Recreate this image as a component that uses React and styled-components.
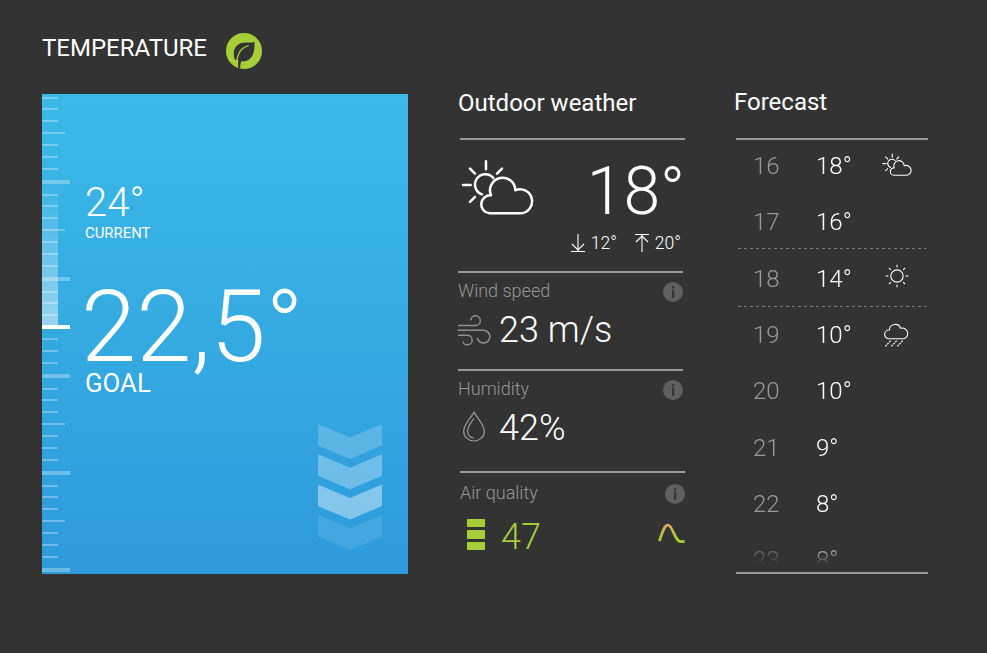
import React from 'react';
import styled, { createGlobalStyle, css } from 'styled-components';

const GlobalStyle = createGlobalStyle`
  *, *::before, *::after { box-sizing: border-box; }
  html, body { margin: 0; background: #333333; }
  body { font-family: Roboto, "Liberation Sans", sans-serif; color: #fff; overflow: hidden; }
  svg { display: block; flex: none; }
`;

const Page = styled.main`
  width: 987px;
  height: 653px;
  padding: 33px 0 0 42px;
  background: #333333;
  display: grid;
  grid-template-columns: 366px 227px 194px;
  column-gap: 50px;
  align-items: start;
`;

const TemperatureSection = styled.section`
  display: flex;
  flex-direction: column;
`;

const TitleBar = styled.header`
  display: flex;
  align-items: flex-start;
  justify-content: space-between;
  width: 220px;
  height: 61px;
`;

const Title = styled.h1`
  margin: 0 0 ${(p) => p.$gap || 0}px;
  font-size: 24px;
  font-weight: 400;
  line-height: 30px;
  white-space: nowrap;
`;

const Card = styled.div`
  position: relative;
  display: flex;
  width: 366px;
  height: 480px;
  background: linear-gradient(to bottom, #3bb9e8 0%, #35aae1 50%, #2d9adc 100%);
  overflow: hidden;
`;

const Scale = styled.div`
  position: relative;
  width: 43px;
  padding-top: 3px;
  display: flex;
  flex-direction: column;
  align-items: flex-start;
`;

const Fill = styled.div`
  position: absolute;
  left: 0;
  top: 88px;
  width: 16px;
  height: 145px;
  background: linear-gradient(to bottom, rgba(255, 255, 255, 0), rgba(255, 255, 255, 0.5));
`;

const tickKinds = {
  minor: css`width: 16px; height: 2px; margin-bottom: 10px;`,
  lead: css`width: 16px; height: 2px; margin-bottom: 9px;`,
  middle: css`width: 23px; height: 2px; margin-bottom: 10px;`,
  major: css`width: 28px; height: 4px; margin-bottom: 10px;`,
  goal: css`width: 28px; height: 4px; margin: -1px 0 9px; background: #fff;`,
};

const Tick = styled.div`
  flex: none;
  background: rgba(255, 255, 255, 0.3);
  ${(p) => tickKinds[p.$kind]}
`;

const Readings = styled.div`
  flex: 1;
  padding-top: 85px;
`;

const Reading = styled.div`
  font-size: ${(p) => p.$size}px;
  line-height: ${(p) => p.$line}px;
  font-weight: ${(p) => (p.$light ? 300 : 400)};
  margin: ${(p) => p.$margin || '0'};
  white-space: nowrap;
`;

const Trend = styled.div`
  align-self: flex-end;
  margin: 0 26px 24px 0;
`;

const Outdoor = styled.section`
  padding-top: 55px;
`;

const Block = styled.div`
  width: 225px;
  height: ${(p) => p.$height}px;
  margin-left: ${(p) => p.$shift || 0}px;
  border-top: 2px solid #999;
  display: flex;
  flex-direction: column;
`;

const Summary = styled.div`
  display: flex;
  justify-content: space-between;
  padding: 19px 0 0 1px;
`;

const BigTemp = styled.div`
  font-size: 66px;
  font-weight: 300;
  line-height: 66px;
`;

const Range = styled.div`
  display: flex;
  justify-content: flex-end;
  align-items: center;
  gap: 18px;
  padding-right: 4px;
  margin-top: 7px;
`;

const RangeItem = styled.div`
  display: flex;
  align-items: center;
  gap: 6px;
  font-size: 17.6px;
  font-weight: 300;
  line-height: 22px;
`;

const Row = styled.div`
  display: flex;
  align-items: center;
  justify-content: space-between;
  height: ${(p) => p.$height || 22}px;
  margin-top: ${(p) => p.$top || 0}px;
`;

const Label = styled.div`
  font-size: 18px;
  font-weight: 300;
  color: #969696;
  line-height: 22px;
`;

const Value = styled.div`
  font-size: 36px;
  font-weight: 300;
  line-height: 40px;
  color: ${(p) => p.$color || '#fff'};
  flex: 1;
`;

const IconSlot = styled.div`
  width: 41px;
  flex: none;
  display: flex;
  padding: 0 0 ${(p) => p.$lift || 0}px ${(p) => p.$left || 0}px;
`;

const TrendSlot = styled.div`
  padding-bottom: 8px;
`;

const InfoSlot = styled.div`
  padding-top: 2px;
`;

const Bars = styled.div`
  display: grid;
  gap: 3px;
`;

const Bar = styled.div`
  width: 18px;
  height: 8.4px;
  background: #a6ce39;
`;

const Forecast = styled.section`
  padding-top: 54px;
  margin-left: -1px;
`;

const Days = styled.div`
  margin-left: 2px;
  width: 192px;
  height: 436px;
  border-top: 2px solid #999;
  border-bottom: 2px solid #999;
`;

const DayList = styled.div`
  height: 427px;
  margin-top: -2px;
  overflow: hidden;
  mask-image: linear-gradient(to bottom, #000 402px, transparent 427px);
`;

const Day = styled.div`
  display: grid;
  grid-template-columns: 63px 64px 1fr;
  align-items: center;
  height: 56.3px;
  padding-left: 17px;
  font-size: 24px;
  line-height: 28px;
  font-weight: 300;
`;

const DayNumber = styled.span`
  color: #999;
`;

const DayTemp = styled.span`
  color: #fff;
`;

const DayIcon = styled.span`
  display: flex;
  justify-content: center;
  width: 34px;
  margin-top: ${(p) => p.$offset}px;
`;

const Rule = styled.svg`
  height: 1px;
  width: 188px;
  margin: ${(p) => p.$margin};
`;

function DashedRule({ margin }) {
  return (
    <Rule $margin={margin} viewBox="0 0 188 1">
      <path d="M0 .5h188" stroke="#777" strokeDasharray="3 3" />
    </Rule>
  );
}

function LeafBadge() {
  return (
    <svg width="36" height="36" viewBox="0 0 108 108">
      <circle cx="54" cy="54" r="54" fill="#a6ce39" />
      <path
        d="M27 81C18 56 26 38 44 31C57 26 72 31 86 27C85 50 84 68 70 79C62 85 53 86 46 85C43 92 42 99 43 108L37 107C36 97 36 90 37 81Z"
        fill="#333"
      />
      <path d="M68 38C48 43 34 60 32 90" fill="none" stroke="#a6ce39" strokeWidth="4" />
    </svg>
  );
}

function Chevrons() {
  return (
    <svg width="64" height="126" viewBox="0 0 64 126" fill="#fff">
      {[0.2, 0.3, 0.41, 0.11].map((opacity, i) => (
        <path
          key={i}
          opacity={opacity}
          transform={`translate(0 ${i * 30.3})`}
          d="M0 0L32 13.4L64 0V21.5L32 35L0 21.5Z"
        />
      ))}
    </svg>
  );
}

function PartlyCloudy({ width, stroke }) {
  return (
    <svg
      width={width}
      height={(width * 170) / 220}
      viewBox="34 236 220 170"
      fill="none"
      stroke="#fff"
      strokeWidth={stroke}
      strokeLinecap="round"
    >
      <path d="M109 243V267M61 265L76 280M157 265L142 280M40 314H63M61 365L76 350" />
      <path d="M131 293A31 31 0 1 0 97 342" />
      <path
        d="M120 399A27 27 0 0 1 124 345A38 38 0 1 1 197 330A36 36 0 1 1 211 399Z"
        strokeLinejoin="round"
      />
    </svg>
  );
}

function Sun() {
  const rays = [0, 45, 90, 135, 180, 225, 270, 315];
  return (
    <svg width="24" height="24" viewBox="-36 -36 72 72" fill="none" stroke="#fff" strokeWidth="3.4">
      <circle r="18.5" />
      {rays.map((a) => (
        <path key={a} d="M0 -26V-34" transform={`rotate(${a})`} />
      ))}
    </svg>
  );
}

function Rain() {
  return (
    <svg width="28" height="25" viewBox="475 64 84 75" fill="none" stroke="#fff" strokeWidth="3.2">
      <path d="M492 114A13 13 0 0 1 494 88A17.5 17.5 0 0 1 528 83A16 16 0 1 1 538 114Z" />
      <path
        d="M498 120L482 137M516 120L500 137M534 120L518 137"
        strokeDasharray="6 3"
        strokeWidth="3.6"
      />
    </svg>
  );
}

function Wind() {
  return (
    <svg width="33" height="31" viewBox="24 164 99 93" fill="none" stroke="#909090" strokeWidth="4.4">
      <path d="M24 195.5H77A14.5 14.5 0 1 0 62 180" />
      <path d="M24 210H101A19 19 0 1 1 82 233" />
      <path d="M24 224.5H52A14.5 14.5 0 1 1 38 243" />
    </svg>
  );
}

function Drop() {
  return (
    <svg width="22" height="31" viewBox="38 151 66 93" fill="none" stroke="#999" strokeWidth="3.6">
      <path d="M71 155C60 174 40 192 40 212A31 29 0 0 0 102 212C102 192 82 174 71 155Z" />
      <path d="M71 173C60 187 52 198 52 211C52 224 60 231 71 232" />
    </svg>
  );
}

function Info() {
  return (
    <InfoSlot>
      <svg width="20" height="20" viewBox="0 0 20 20">
        <circle cx="10" cy="10" r="10" fill="#606060" />
        <path d="M9 4.2h2.2v2.2H9zM9 7.8h2.2v8H9z" fill="#333" />
      </svg>
    </InfoSlot>
  );
}

function Arrow({ up }) {
  return (
    <svg width="14" height="18" viewBox="0 0 14 18" fill="none" stroke="#fff">
      <g transform={up ? 'rotate(180 7 9)' : undefined}>
        <path d="M7 0V17" strokeWidth="1.8" strokeOpacity=".6" />
        <path d="M1 10L7 16L13 10" strokeWidth="1.2" />
        <path d="M0 17.5H14" strokeWidth="1" />
      </g>
    </svg>
  );
}

function QualityCurve() {
  return (
    <svg width="27" height="20" viewBox="625 190 81 60" fill="none">
      <defs>
        <linearGradient id="quality" x1="0" y1="0" x2="0" y2="1">
          <stop offset="0" stopColor="#e6ab5b" />
          <stop offset="0.8" stopColor="#a6ce39" />
        </linearGradient>
      </defs>
      <path
        d="M629 244C639 216 644 196 655 196C669 196 675 246 694 246C698 246 701 246 705 245"
        stroke="url(#quality)"
        strokeWidth="8"
      />
    </svg>
  );
}

const group = ['lead', 'minor', 'minor', 'middle', 'minor', 'minor', 'minor', 'major'];
const ticks = [0, 1, 2, 3, 4].flatMap((g) =>
  group.map((kind) => (g === 2 && kind === 'middle' ? 'goal' : kind))
);

const days = [
  { day: 16, temp: 18, icon: <PartlyCloudy width={30} stroke={8} />, offset: -4 },
  { day: 17, temp: 16 },
  { day: 18, temp: 14, icon: <Sun />, offset: -5 },
  { day: 19, temp: 10, icon: <Rain />, offset: -2 },
  { day: 20, temp: 10 },
  { day: 21, temp: 9 },
  { day: 22, temp: 8 },
  { day: 23, temp: 8 },
];

export default function App() {
  return (
    <Page>
      <GlobalStyle />
      <TemperatureSection>
        <TitleBar>
          <Title>TEMPERATURE</Title>
          <LeafBadge />
        </TitleBar>
        <Card>
          <Scale>
            <Fill />
            {ticks.map((kind, i) => (
              <Tick key={i} $kind={kind} />
            ))}
          </Scale>
          <Readings>
            <Reading $size={40} $line={48} $light>24°</Reading>
            <Reading $size={14.9} $line={16} $margin="-2px 0 0">CURRENT</Reading>
            <Reading $size={99.5} $line={92} $light $margin="40px 0 0 -4px">22,5°</Reading>
            <Reading $size={25.8} $line={26} $margin="-3px 0 0 0">GOAL</Reading>
          </Readings>
          <Trend>
            <Chevrons />
          </Trend>
        </Card>
      </TemperatureSection>

      <Outdoor>
        <Title $gap={20}>Outdoor weather</Title>
        <Block $height={133} $shift={2}>
          <Summary>
            <PartlyCloudy width={73.3} stroke={7.5} />
            <BigTemp>18°</BigTemp>
          </Summary>
          <Range>
            <RangeItem><Arrow />12°</RangeItem>
            <RangeItem><Arrow up />20°</RangeItem>
          </Range>
        </Block>
        <Block $height={98}>
          <Row $top={7}><Label>Wind speed</Label><Info /></Row>
          <Row $top={8} $height={40}><IconSlot><Wind /></IconSlot><Value>23 m/s</Value></Row>
        </Block>
        <Block $height={102}>
          <Row $top={7}><Label>Humidity</Label><Info /></Row>
          <Row $top={8} $height={40}><IconSlot $left={5} $lift={4}><Drop /></IconSlot><Value>42%</Value></Row>
        </Block>
        <Block $height={90} $shift={2}>
          <Row $top={9}><Label>Air quality</Label><Info /></Row>
          <Row $top={13} $height={40}>
            <IconSlot $left={7} $lift={5}><Bars><Bar /><Bar /><Bar /></Bars></IconSlot>
            <Value $color="#a6ce39">47</Value>
            <TrendSlot><QualityCurve /></TrendSlot>
          </Row>
        </Block>
      </Outdoor>

      <Forecast>
        <Title $gap={21}>Forecast</Title>
        <Days>
          <DayList>
            {days.map(({ day, temp, icon, offset }) => (
              <React.Fragment key={day}>
                <Day>
                  <DayNumber>{day}</DayNumber>
                  <DayTemp>{temp}°</DayTemp>
                  {icon && <DayIcon $offset={offset}>{icon}</DayIcon>}
                </Day>
                {(day === 17 || day === 18) && (
                  <DashedRule margin={day === 17 ? '-3px 0 2px 2px' : '-1px 0 0 2px'} />
                )}
              </React.Fragment>
            ))}
          </DayList>
        </Days>
      </Forecast>
    </Page>
  );
}
